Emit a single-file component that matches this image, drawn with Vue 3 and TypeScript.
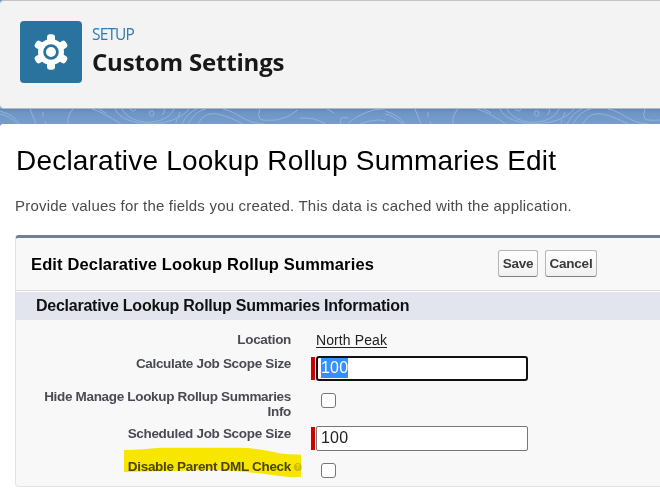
<script setup lang="ts">
import { ref } from 'vue'

interface Field {
  label: string
  kind: 'link' | 'text' | 'checkbox'
  value: string
  name: string
  focused?: boolean
  marked?: boolean
}

const fields = ref<Field[]>([
  { name: 'location', label: 'Location', kind: 'link', value: 'North Peak' },
  { name: 'calculate', label: 'Calculate Job Scope Size', kind: 'text', value: '100', focused: true },
  { name: 'hide', label: 'Hide Manage Lookup Rollup Summaries Info', kind: 'checkbox', value: '' },
  { name: 'scheduled', label: 'Scheduled Job Scope Size', kind: 'text', value: '100' },
  { name: 'disable', label: 'Disable Parent DML Check', kind: 'checkbox', value: '', marked: true },
])
</script>

<template>
  <div class="page">
    <header class="banner">
      <div class="tile">
        <svg width="34" height="36" viewBox="-17 -18 34 36">
          <g fill="#fff">
            <circle r="13" />
            <rect v-for="a in [0, 60, 120]" :key="a" x="-4" y="-17.8" width="8" height="35.6" rx="3" :transform="`rotate(${a})`" />
          </g>
          <circle r="6.4" fill="#fff" stroke="#2a739e" stroke-width="2.8" />
        </svg>
      </div>
      <div class="titles">
        <div class="eyebrow">SETUP</div>
        <div class="title">Custom Settings</div>
      </div>
    </header>
    <div class="strip">
      <svg width="660" height="15" viewBox="0 0 660 15">
        <defs>
          <pattern id="topo" width="385" height="15" patternUnits="userSpaceOnUse">
            <g fill="none" stroke="#8fb3da" stroke-width="1">
              <path d="M0 2Q14 6 20 15M30 0L36 15M43 3V8M45 12L46 15M68 15Q67 6 73 0M92 0Q103 3 121 15M99 0L106 4" />
              <path d="M115 0C123 19 174 20 189 0M122 0C130 17 166 18 174 0M130 0Q134 4 136 0M162 6Q166 3 164 0" />
              <ellipse cx="151.7" cy="4.4" rx="2.2" ry="2.8" />
              <path d="M180 3L178 8M177 10L176 14M182 15Q188 3 197 0M188 15Q196 1 206 0M198 15C206 -1 221 4 243 15M223 0C239 3 243 14 264 15" />
              <path d="M260 0Q257 6 260 10Q263 12 277 11Q288 9 298 1M300 9Q315 8 325 15M327 0L334 4M341 15Q338 6 348 9M348 14Q366 0 383 0M360 15Q379 7 397 15" />
              <path d="M383 0H385M0 5Q8 6 18 15" />
            </g>
          </pattern>
        </defs>
        <rect width="660" height="15" fill="url(#topo)" />
      </svg>
    </div>
    <main class="content">
      <h1>Declarative Lookup Rollup Summaries Edit</h1>
      <p class="intro">Provide values for the fields you created. This data is cached with the application.</p>
      <section class="panel">
        <div class="panel-head">
          <h2>Edit Declarative Lookup Rollup Summaries</h2>
          <div class="actions">
            <button type="button" class="save">Save</button>
            <button type="button" class="cancel">Cancel</button>
          </div>
        </div>
        <h3>Declarative Lookup Rollup Summaries Information</h3>
        <div class="form">
          <div v-for="f in fields" :key="f.name" class="row" :class="f.name">
            <div class="label">
              {{ f.label }}
              <template v-if="f.marked">
                <span class="help">?</span>
                <svg class="marker" width="177" height="31" viewBox="0 0 177 31">
                  <path d="M0 3Q20 2.5 36 .8H116Q130 1 145 4Q160 8 177 7.5V30H166Q154 29 145 27.5Q120 24 90 23L0 25Z" fill="#ffed00" />
                </svg>
              </template>
            </div>
            <a v-if="f.kind === 'link'" class="link">{{ f.value }}</a>
            <div v-else-if="f.kind === 'text'" class="required">
              <div class="input" :class="{ focused: f.focused }"><span>{{ f.value }}</span></div>
            </div>
            <span v-else class="check"></span>
          </div>
        </div>
      </section>
    </main>
  </div>
</template>

<style>
body { margin: 0; overflow: hidden; background: #fff; }
</style>

<style scoped>
* { box-sizing: border-box; }
.page { width: 660px; height: 497px; overflow: hidden; background: #6d97c6; font-family: "Liberation Sans", Arial, sans-serif; }
.banner { display: flex; height: 109px; padding: 20px 0 0 20px; background: #f3f3f3; border-top: 1px solid #c4c4c4; border-bottom: 1px solid #b7babd; border-radius: 4px 0 0 4px; }
.tile { display: flex; align-items: center; justify-content: center; width: 62px; height: 62px; border-radius: 4px; background: #2a739e; }
.titles { padding: 3px 0 0 10px; font-family: "Open Sans", "Noto Sans", sans-serif; white-space: nowrap; }
.eyebrow { height: 21px; font-size: 15.5px; line-height: 21px; color: #2f7bab; letter-spacing: -0.85px; }
.title { font-size: 24px; line-height: 33px; font-weight: 700; color: #181818; letter-spacing: -0.17px; }
.strip { height: 15px; background: linear-gradient(#6389b4, #6e96c5 4px, #779dca); }
.strip svg { display: block; }
.content { height: 373px; padding: 0 0 0 15px; background: #fff; border-top-left-radius: 3px; }
h1 { height: 72px; margin: 0; padding: 20px 0 0 1px; font-size: 28px; line-height: 34px; font-weight: 400; color: #000; letter-spacing: .2px; white-space: nowrap; }
.intro { height: 39px; margin: 0; font-size: 15px; line-height: 20px; color: #4b4b4b; letter-spacing: .2px; white-space: nowrap; }
.panel { width: 660px; height: 252px; background: #f8f8f8; border: 1px solid #e3e3e5; border-top: 3px solid #747e96; border-radius: 4px; }
.panel-head { display: flex; height: 53px; border-bottom: 1px solid #dbdbdb; }
h2 { width: 482px; margin: 0; padding: 16px 0 0 15px; font-size: 16.5px; line-height: 20px; color: #000; letter-spacing: .14px; white-space: nowrap; }
.actions { display: flex; gap: 7px; padding-top: 12px; }
button { height: 27px; padding: 0; border: 1px solid #b5b5b5; border-bottom-color: #7f7f7f; border-radius: 3px; background: linear-gradient(#fff, #f1f1f1); font: bold 13.5px/24px "Liberation Sans", Arial, sans-serif; letter-spacing: -.25px; color: #3a3a3a; }
.save { width: 40px; }
.cancel { width: 52px; }
h3 { height: 29px; margin: 0; padding: 0 0 0 20px; border-top: 1px solid #fff; background: #e3e5ee; font-size: 16px; line-height: 27px; color: #111; letter-spacing: -.25px; white-space: nowrap; }
.form { padding-top: 9px; }
.row { display: flex; align-items: flex-start; }
.label { position: relative; width: 275px; padding-left: 20px; font-size: 13.5px; line-height: 15px; font-weight: 700; text-align: right; color: #4a4a56; letter-spacing: -.32px; }
.location { height: 26px; }
.location .label { padding-top: 3px; }
.calculate { height: 34px; }
.hide { height: 35px; }
.scheduled { height: 35px; }
.calculate .label, .scheduled .label { padding-top: 1px; }
.scheduled .label { padding-top: 2px; }
.link { margin: 3px 0 0 25px; font-size: 14px; line-height: 17px; color: #222; letter-spacing: .1px; text-decoration: underline; text-decoration-skip-ink: none; text-underline-offset: 2px; }
.required { margin-left: 20px; padding-left: 5px; background: linear-gradient(#c00, #c00) 0 1px / 4px 23px no-repeat; }
.calculate .required { margin-top: 1px; }
.scheduled .required { margin-top: 2px; }
.input { width: 212px; height: 25px; padding-left: 4px; border: 1px solid #777; border-radius: 2px; background: #fff; font-size: 16px; line-height: 22px; letter-spacing: .2px; color: #222; }
.input.focused { border: 2px solid #111; border-radius: 3px; padding-left: 3px; }
.focused span { display: inline-block; height: 20px; line-height: 19px; color: #fff; background: #3390ff; vertical-align: top; }
.check { width: 15px; height: 15px; margin: 4px 0 0 30px; border: 1px solid #767676; border-radius: 3px; background: #fff; }
.marker { position: absolute; left: 108px; top: -12px; mix-blend-mode: multiply; }
.help { position: absolute; left: 278px; top: 4px; width: 8px; height: 8px; border-radius: 4px; background: #cfc9c4; color: #fff; font-size: 7px; line-height: 8px; text-align: center; letter-spacing: 0; }
</style>
